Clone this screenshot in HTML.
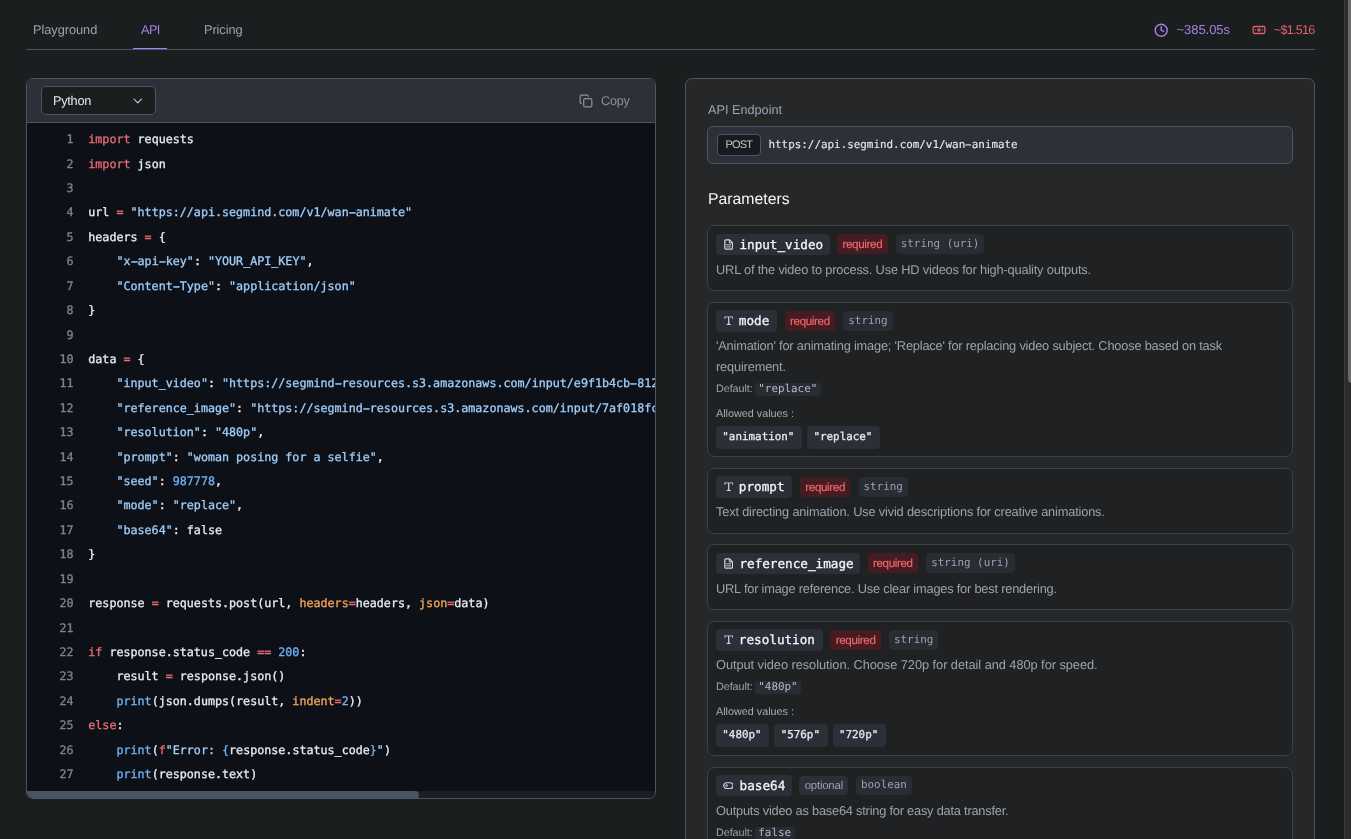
<!DOCTYPE html>
<html lang="en">
<head>
<meta charset="utf-8">
<title>API</title>
<style>
*{box-sizing:border-box;margin:0;padding:0}
html,body{width:1351px;height:839px;overflow:hidden;background:#1b1e1f;}
body{position:relative;font-family:"Liberation Sans",sans-serif;color:#9ca3af;-webkit-font-smoothing:antialiased;text-rendering:geometricPrecision}
#root{position:absolute;left:0;top:0;width:1351px;height:839px;will-change:transform;overflow:hidden}
.mono{font-family:"DejaVu Sans Mono","Liberation Mono",monospace}
.abs{position:absolute}
/* tabs */
.tabline{left:26px;top:49px;width:1289px;height:1px;background:#4b5563}
.tab{top:21px;height:18px;line-height:18px;font-size:12.8px;color:#9ca3af;white-space:nowrap}
.tab.active{color:#a57fe6}
.tabul{left:133px;top:47.9px;width:34px;height:1.25px;background:#a97ff0}
.stat{top:21px;height:18px;line-height:18px;font-size:13px;white-space:nowrap}
/* left card */
.card{left:26px;top:78px;width:630px;height:721px;border:1px solid #4b5563;border-radius:7px;background:#0d1117;overflow:hidden}
.chead{left:0;top:0;width:628px;height:44px;background:#2c3039;border-bottom:1px solid #4b5563}
.select{left:14px;top:7px;width:115px;height:28.6px;border:1px solid #4b5563;border-radius:5px;background:#1b1e1f;color:#e5e7eb;font-size:12.8px;line-height:27.4px;padding-left:11px;letter-spacing:-0.3px}
.copy{left:574px;top:13px;height:18px;line-height:18px;font-size:12.6px;color:#8b919c;letter-spacing:-0.2px}
.code{left:0;top:44px;width:628px;height:668px;padding-top:4.15px;overflow:hidden}
.ln{-webkit-text-stroke:0.3px;height:24.43px;line-height:24.43px;font-size:11.7px;white-space:pre;color:#e6edf3;display:flex}
.ln b{font-weight:normal;display:block;width:46.6px;text-align:right;color:#7d8590;flex:none}
.ln i{font-style:normal;display:block;padding-left:14.7px}
u{text-decoration:none;display:inline-block;transform:scaleX(1.9)}
.k{color:#ec6a78}.s{color:#9fcdfa}.n{color:#70b2f6}.o{color:#f7a45f}
.hscroll{left:0;top:711.5px;width:628px;height:8px;background:#1a1e27}
.hthumb{left:0;top:0;width:392px;height:8px;background:#4b5260;border-radius:0 4px 4px 0}
/* right panel */
.panel{left:685px;top:78px;width:630px;height:800px;border:1px solid #4b5563;border-radius:7px;background:#262729}
.lbl{left:22px;top:22.4px;font-size:12.7px;line-height:18px;color:#9ca3af}
.endpoint{left:21px;top:46.5px;width:586px;height:38.5px;border:1px solid #4b5563;border-radius:6px;background:#2c3039}
.post{left:8.6px;top:7px;width:44.5px;height:22px;border:1px solid #4b5563;border-radius:4px;background:#181b1d;color:#c3c7ce;font-size:11px;line-height:21.6px;text-align:center;letter-spacing:-0.85px}
.url{left:60.5px;top:9.5px;font-size:10.9px;line-height:18px;color:#e5e7eb;white-space:pre;-webkit-text-stroke:0.15px}
.h2{left:22px;top:109px;font-size:15.8px;line-height:24px;color:#f3f4f6}
.params{left:21px;top:146px;width:586px}
.pc{position:absolute;left:0;width:586px;border:1px solid #3b404a;border-radius:7px;background:#202123;padding:7px 8px 0 8px}
.row{display:flex;align-items:flex-start;height:21.7px;white-space:nowrap}
.f .nb{margin-top:1.1px;height:20.6px;padding-right:6.3px}
.f .desc{margin-top:4.37px}
.g .nb{height:20.8px;padding-left:6.6px;padding-right:6.8px}
.g .nb svg{margin-right:6.2px}
.g .opt{height:18.8px;margin-left:6.9px;padding:0 5.4px 0 5.7px;letter-spacing:-0.2px}
.g .ty{height:18.8px;margin-left:7.6px;line-height:17.4px}
.nb{height:21.7px;border-radius:4px;background:#2b2f38;color:#f3f4f6;font-size:12.675px;line-height:21px;padding:0 7.8px 0 8px;display:flex;align-items:center;-webkit-text-stroke:0.3px}
.nb svg{margin-right:5.4px;flex:none}
.f .nb svg{margin-right:6px}
.req{height:19.9px;margin:0.9px 0 0 7.6px;border-radius:4px;background:#451c22;color:#f4686d;-webkit-text-stroke:0.15px;font-size:11.6px;letter-spacing:-0.35px;line-height:21.6px;padding:0 5.4px}
.opt{height:19.9px;margin:0.9px 0 0 7.6px;border-radius:4px;background:#2b2f38;color:#9ca3af;font-size:11.4px;letter-spacing:-0.3px;line-height:21.6px;padding:0 5.4px}
.ty{height:19.9px;margin:0.9px 0 0 8.1px;border-radius:4px;background:#282c33;color:#9ca3af;font-size:10.9px;line-height:19px;padding:0 5px}
.desc{margin-top:3.27px;font-size:12.8px;line-height:21px;color:#9ca3af;letter-spacing:-0.17px;white-space:nowrap}
.def{position:relative;top:2px;margin-top:3.49px;height:15.6px;line-height:15.6px;display:flex;align-items:center;font-size:10.8px;letter-spacing:-0.08px;color:#9ca3af;white-space:nowrap}
.def span{position:relative;top:-0.9px;margin-left:2.2px;height:12.6px;line-height:12.6px;border-radius:3px;background:#282c33;color:#b4bac4;font-size:10.9px;letter-spacing:0;padding:0 3.5px}
.al{position:relative;top:2.4px;margin-top:8.4px;height:15.6px;line-height:15.6px;font-size:10.8px;letter-spacing:0px;color:#a7adb8;white-space:nowrap}
.vals{margin-top:6.04px;display:flex;height:23.2px}
.vals span{height:23.2px;line-height:22.6px;border-radius:4px;background:#2b2f38;color:#e5e7eb;font-size:10.9px;padding:0 7.7px 0 6.3px;margin-right:5px;-webkit-text-stroke:0.3px}
/* page scrollbar */
.sbar{left:1344px;top:0;width:7px;height:839px;background:#2c2c2c;border-left:1px solid #3d3d3d}
.sthumb{left:1348px;top:-5px;width:8px;height:388px;background:#6b6b6b;border-radius:4px}
</style>
</head>
<body>
<div id="root">
<!-- top tabs -->
<div class="abs tab" style="left:33px;letter-spacing:-0.05px">Playground</div>
<div class="abs tab active" style="left:141px;letter-spacing:-0.6px">API</div>
<div class="abs tab" style="left:204px;letter-spacing:-0.1px">Pricing</div>
<div class="abs tabline"></div>
<div class="abs tabul"></div>
<svg class="abs" style="left:1153.9px;top:22.9px" width="14.4" height="14.4" viewBox="0 0 24 24" fill="none" stroke="#a57fe0" stroke-width="2.4" stroke-linecap="round" stroke-linejoin="round"><circle cx="12" cy="12" r="10"/><path d="M12 6v6l4 2"/></svg>
<div class="abs stat" style="left:1176.5px;color:#a57fe0;letter-spacing:-0.05px">~385.05s</div>
<svg class="abs" style="left:1252px;top:23px" width="14" height="14" viewBox="0 0 24 24" fill="none" stroke="#e0606c" stroke-width="2.2" stroke-linecap="round" stroke-linejoin="round"><rect x="2" y="6" width="20" height="12" rx="2"/><circle cx="12" cy="12" r="2"/><path d="M6 12h.01M18 12h.01"/></svg>
<div class="abs stat" style="left:1274px;color:#e0606c;font-size:12.6px;letter-spacing:-0.75px">~$1.516</div>

<!-- left code card -->
<div class="abs card">
  <div class="abs chead">
    <div class="abs select">Python
      <svg class="abs" style="left:90.6px;top:10.9px" width="10" height="7" viewBox="0 0 10 7" fill="none" stroke="#c3c7cf" stroke-width="1.2" stroke-linecap="round" stroke-linejoin="round"><path d="M1 1.2l3.75 3.75 3.75-3.75"/></svg>
    </div>
    <svg class="abs" style="left:552px;top:15px" width="14" height="14" viewBox="0 0 24 24" fill="none" stroke="#8b919c" stroke-width="2.1" stroke-linecap="round" stroke-linejoin="round"><rect x="8" y="8" width="14" height="14" rx="2.5"/><path d="M4 16c-1.1 0-2-.9-2-2V4c0-1.1.9-2 2-2h10c1.1 0 2 .9 2 2"/></svg>
    <div class="abs copy">Copy</div>
  </div>
  <div class="abs code mono">
<div class="ln"><b>1</b><i><span class="k">import</span> requests</i></div>
<div class="ln"><b>2</b><i><span class="k">import</span> json</i></div>
<div class="ln"><b>3</b><i></i></div>
<div class="ln"><b>4</b><i>url <span class="k">=</span> <span class="s">"https://api.segmind.com/v1/wan<u>-</u>animate"</span></i></div>
<div class="ln"><b>5</b><i>headers <span class="k">=</span> {</i></div>
<div class="ln"><b>6</b><i>    <span class="s">"x<u>-</u>api<u>-</u>key"</span>: <span class="s">"YOUR_API_KEY"</span>,</i></div>
<div class="ln"><b>7</b><i>    <span class="s">"Content<u>-</u>Type"</span>: <span class="s">"application/json"</span></i></div>
<div class="ln"><b>8</b><i>}</i></div>
<div class="ln"><b>9</b><i></i></div>
<div class="ln"><b>10</b><i>data <span class="k">=</span> {</i></div>
<div class="ln"><b>11</b><i>    <span class="s">"input_video"</span>: <span class="s">"https://segmind<u>-</u>resources.s3.amazonaws.com/input/e9f1b4cb<u>-</u>8123<u>-</u>4ea3<u>-</u>9f1e<u>-</u>animate<u>-</u>video.mp4"</span>,</i></div>
<div class="ln"><b>12</b><i>    <span class="s">"reference_image"</span>: <span class="s">"https://segmind<u>-</u>resources.s3.amazonaws.com/input/7af018fc<u>-</u>4d2b<u>-</u>image.png"</span>,</i></div>
<div class="ln"><b>13</b><i>    <span class="s">"resolution"</span>: <span class="s">"480p"</span>,</i></div>
<div class="ln"><b>14</b><i>    <span class="s">"prompt"</span>: <span class="s">"woman posing for a selfie"</span>,</i></div>
<div class="ln"><b>15</b><i>    <span class="s">"seed"</span>: <span class="n">987778</span>,</i></div>
<div class="ln"><b>16</b><i>    <span class="s">"mode"</span>: <span class="s">"replace"</span>,</i></div>
<div class="ln"><b>17</b><i>    <span class="s">"base64"</span>: false</i></div>
<div class="ln"><b>18</b><i>}</i></div>
<div class="ln"><b>19</b><i></i></div>
<div class="ln"><b>20</b><i>response <span class="k">=</span> requests.post(url, <span class="o">headers</span><span class="k">=</span>headers, <span class="o">json</span><span class="k">=</span>data)</i></div>
<div class="ln"><b>21</b><i></i></div>
<div class="ln"><b>22</b><i><span class="k">if</span> response.status_code <span class="k">==</span> <span class="n">200</span>:</i></div>
<div class="ln"><b>23</b><i>    result <span class="k">=</span> response.json()</i></div>
<div class="ln"><b>24</b><i>    <span class="n">print</span>(json.dumps(result, <span class="o">indent</span><span class="k">=</span><span class="n">2</span>))</i></div>
<div class="ln"><b>25</b><i><span class="k">else</span>:</i></div>
<div class="ln"><b>26</b><i>    <span class="n">print</span>(<span class="k">f</span><span class="s">"Error: </span><span class="n">{</span>response.status_code<span class="n">}</span><span class="s">"</span>)</i></div>
<div class="ln"><b>27</b><i>    <span class="n">print</span>(response.text)</i></div>
  </div>
  <div class="abs hscroll"><div class="abs hthumb"></div></div>
</div>

<!-- right panel -->
<div class="abs panel">
  <div class="abs lbl">API Endpoint</div>
  <div class="abs endpoint">
    <div class="abs post">POST</div>
    <div class="abs url mono">https://api.segmind.com/v1/wan<u>-</u>animate</div>
  </div>
  <div class="abs h2">Parameters</div>
  <div class="abs params">
<div class="pc f" style="top:0px;height:66px"><div class="row"><div class="nb mono"><svg width="9.4" height="10.8" viewBox="0 0 10 11.5" fill="none" stroke="#d4d7dc" stroke-width="1.35" stroke-linejoin="round" stroke-linecap="round"><path d="M1.8 0.9h4.1l3.2 3.2v5.7a.9.9 0 0 1-.9.9H1.8a.9.9 0 0 1-.9-.9V1.8a.9.9 0 0 1 .9-.9z"/><path d="M5.7 1.1v3.1h3.2" stroke-width="1"/><path d="M2.9 6.2h4.2M2.9 8.4h4.2" stroke-width="1"/></svg>input_video</div><span class="req">required</span><span class="ty mono">string (uri)</span></div><div class="desc" style="letter-spacing:-0.17px">URL of the video to process. Use HD videos for high-quality outputs.</div></div>
<div class="pc" style="top:77px;height:155px"><div class="row"><div class="nb mono"><svg width="9.4" height="9.4" viewBox="0 0 10 10" fill="#d1d5db"><path d="M0.5 0.4h9v2.5H8.7l-.35-1.5H5.65v6.9l1.5.3v.9H2.85v-.9l1.5-.3V1.4H1.65L1.3 2.9H.5z"/></svg>mode</div><span class="req">required</span><span class="ty mono">string</span></div><div class="desc" style="letter-spacing:-0.19px">'Animation' for animating image; 'Replace' for replacing video subject. Choose based on task</div><div class="desc" style="letter-spacing:-0.17px;margin-top:0">requirement.</div><div class="def">Default: <span class="mono">"replace"</span></div><div class="al">Allowed values :</div><div class="vals mono"><span>"animation"</span><span>"replace"</span></div></div>
<div class="pc" style="top:243px;height:66px"><div class="row"><div class="nb mono"><svg width="9.4" height="9.4" viewBox="0 0 10 10" fill="#d1d5db"><path d="M0.5 0.4h9v2.5H8.7l-.35-1.5H5.65v6.9l1.5.3v.9H2.85v-.9l1.5-.3V1.4H1.65L1.3 2.9H.5z"/></svg>prompt</div><span class="req">required</span><span class="ty mono">string</span></div><div class="desc" style="letter-spacing:-0.17px">Text directing animation. Use vivid descriptions for creative animations.</div></div>
<div class="pc f" style="top:319px;height:66px"><div class="row"><div class="nb mono"><svg width="9.4" height="10.8" viewBox="0 0 10 11.5" fill="none" stroke="#d4d7dc" stroke-width="1.35" stroke-linejoin="round" stroke-linecap="round"><path d="M1.8 0.9h4.1l3.2 3.2v5.7a.9.9 0 0 1-.9.9H1.8a.9.9 0 0 1-.9-.9V1.8a.9.9 0 0 1 .9-.9z"/><path d="M5.7 1.1v3.1h3.2" stroke-width="1"/><path d="M2.9 6.2h4.2M2.9 8.4h4.2" stroke-width="1"/></svg>reference_image</div><span class="req">required</span><span class="ty mono">string (uri)</span></div><div class="desc" style="letter-spacing:-0.2px">URL for image reference. Use clear images for best rendering.</div></div>
<div class="pc" style="top:396px;height:135px"><div class="row"><div class="nb mono"><svg width="9.4" height="9.4" viewBox="0 0 10 10" fill="#d1d5db"><path d="M0.5 0.4h9v2.5H8.7l-.35-1.5H5.65v6.9l1.5.3v.9H2.85v-.9l1.5-.3V1.4H1.65L1.3 2.9H.5z"/></svg>resolution</div><span class="req">required</span><span class="ty mono">string</span></div><div class="desc" style="letter-spacing:-0.05px">Output video resolution. Choose 720p for detail and 480p for speed.</div><div class="def">Default: <span class="mono">"480p"</span></div><div class="al">Allowed values :</div><div class="vals mono"><span>"480p"</span><span>"576p"</span><span>"720p"</span></div></div>
<div class="pc g" style="top:542px;height:110px"><div class="row"><div class="nb mono"><svg width="10.8" height="7.2" viewBox="0 0 12 8" fill="none" stroke="#d1d5db" stroke-width="1.3"><rect x="0.8" y="0.8" width="10.4" height="6.4" rx="3.2"/><circle cx="4" cy="4" r="1" stroke-width="1.1"/></svg>base64</div><span class="opt">optional</span><span class="ty mono">boolean</span></div><div class="desc" style="letter-spacing:-0.21px">Outputs video as base64 string for easy data transfer.</div><div class="def">Default: <span class="mono">false</span></div></div>
  </div>
</div>

<!-- page scrollbar -->
<div class="abs sbar"></div>
<div class="abs sthumb"></div>
</div>
</body>
</html>
